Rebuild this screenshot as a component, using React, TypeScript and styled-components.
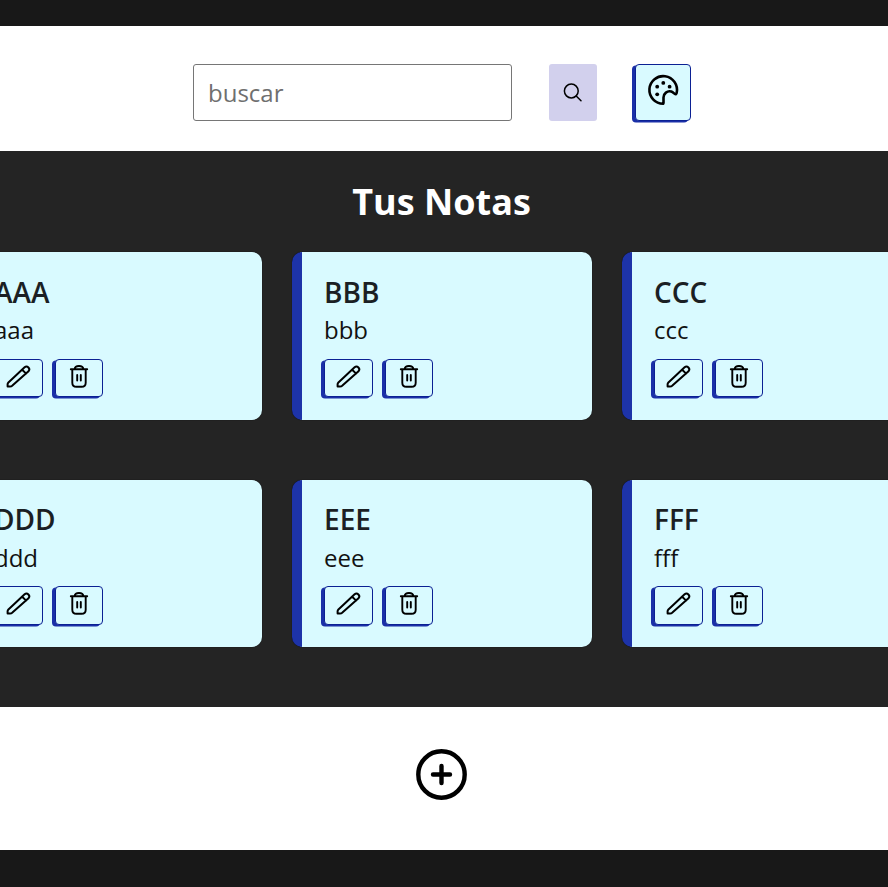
import React from 'react';
import styled, { createGlobalStyle } from 'styled-components';

const GlobalStyle = createGlobalStyle`
  * { box-sizing: border-box; }
  body {
    margin: 0;
    background: #181818;
    font-family: 'Open Sans', 'Noto Sans', sans-serif;
    overflow: hidden;
  }
`;

const Page = styled.div`
  width: 883px;
  padding-top: 26px;
`;

const Band = styled.div<{ $height: number; $dark?: boolean }>`
  width: 888px;
  height: ${(p) => p.$height}px;
  padding-right: 5px;
  background: ${(p) => (p.$dark ? '#242424' : '#fff')};
`;

const Header = styled(Band)`
  display: flex;
  align-items: flex-start;
  padding: 38px 0 0 193px;
`;

const SearchInput = styled.input`
  width: 319px;
  height: 57px;
  margin-right: 37px;
  padding: 0 14px;
  border: 1px solid #767676;
  border-radius: 3px;
  background: #fff;
  font: 400 24px 'Open Sans', sans-serif;
  outline: none;
  &::placeholder { color: #6f6f6f; opacity: 1; }
`;

const SearchButton = styled.button`
  display: flex;
  align-items: center;
  justify-content: center;
  width: 48px;
  height: 57px;
  margin-right: 38px;
  padding: 0;
  border: 0;
  border-radius: 3px;
  background: #d2d0ed;
`;

const RaisedButton = styled.button<{ $width: number; $height: number }>`
  display: flex;
  align-items: flex-start;
  justify-content: center;
  width: ${(p) => p.$width}px;
  height: ${(p) => p.$height}px;
  padding: 0;
  border: 1px solid #0b2093;
  border-radius: 4px;
  background: #d9faff;
  box-shadow: -3px 1.5px 0 #1a2fa8;
  color: #000;
`;

const PaletteButton = styled(RaisedButton)`
  padding-top: 8px;
`;

const Title = styled.h1`
  margin: 0;
  padding-top: 25px;
  height: 101px;
  color: #fff;
  font-size: 36px;
  font-weight: 700;
  line-height: 52px;
  text-align: center;
`;

const NotesGrid = styled.div`
  display: grid;
  grid-template-columns: repeat(3, 300px);
  grid-template-rows: 167.5px 167.5px;
  gap: 60px 30px;
  margin-left: -38px;
`;

const Card = styled.article`
  padding: 19.7px 0 0 22px;
  border-left: 10px solid #1d33a8;
  border-radius: 10px;
  background: #d9faff;
  box-shadow: 0 0 1px #000;
`;

const CardTitle = styled.h2`
  margin: 0;
  color: #1b1f24;
  font-size: 28px;
  font-weight: 600;
  line-height: 40px;
`;

const CardText = styled.p`
  margin: 0;
  padding-top: 0.5px;
  color: #111;
  font-size: 24px;
  line-height: 36px;
`;

const Actions = styled.div`
  display: flex;
  gap: 12px;
  margin-top: 10.6px;
`;

const ActionButton = styled(RaisedButton)`
  padding-top: 4px;
`;

const Footer = styled(Band)`
  display: flex;
  align-items: flex-start;
  justify-content: center;
  padding-top: 42px;
`;

const Viewport = styled.main`
  width: 888px;
  height: 887px;
  overflow: hidden;
`;

const stroke = { fill: 'none', stroke: '#000', strokeLinecap: 'round', strokeLinejoin: 'round' } as const;

const SearchIcon = () => (
  <svg width="20" height="20" viewBox="0 0 20 20" {...stroke} strokeWidth="1.5">
    <circle cx="8.3" cy="8" r="6.9" />
    <path d="m13.2 13 4.8 4.8" />
  </svg>
);

const PaletteIcon = () => (
  <svg width="34" height="34" viewBox="0 0 34 34" {...stroke} strokeWidth="2.6">
    <path d="M17.2 30.7A13.8 13.8 0 1 1 30.7 19.8q-.4 1.9-2 1.1c-.9-.4-1.4-1.6-3.4-2.3-4-1.2-7.8 1.9-7.8 5.9v5.2q0 .9-.3 1z" />
    <g fill="#000" stroke="none">
      <circle cx="11.2" cy="13.7" r="1.9" />
      <circle cx="17.3" cy="9.9" r="1.9" />
      <circle cx="23.6" cy="13.7" r="1.9" />
      <circle cx="11.2" cy="21.3" r="1.9" />
    </g>
  </svg>
);

const PencilIcon = () => (
  <svg width="28" height="26" viewBox="0 0 28 26" {...stroke} strokeWidth="2">
    <path d="M2.6 22.6V20.3Q2.6 19.3 3.4 18.5L19.6 3.3a2.8 2.8 0 0 1 3.9 4L7.4 21.6Q6.4 22.6 5 22.6zM17.2 5.7l3.9 3.9" />
  </svg>
);

const TrashIcon = () => (
  <svg width="22" height="26" viewBox="0 0 22 26" {...stroke} strokeWidth="1.9">
    <path d="M2.8 5.3h16.4M6.6 5.1Q7 2 11 2t4.4 3.1M4.3 5.5v13.2q0 4.1 4.1 4.1h5.2q4.1 0 4.1-4.1V5.5" />
    <path d="M9.2 11v5.6M12.8 11v5.6" />
  </svg>
);

const PlusIcon = () => (
  <svg width="52" height="52" viewBox="0 0 52 52" {...stroke} strokeWidth="4.4">
    <circle cx="25.5" cy="25.5" r="23.2" />
    <path d="M25.5 17v17M17 25.5h17" />
  </svg>
);

const notes = ['A', 'B', 'C', 'D', 'E', 'F'].map((c) => ({
  title: c.repeat(3),
  text: c.toLowerCase().repeat(3),
}));

export default function App() {
  return (
    <Viewport>
      <GlobalStyle />
      <Page>
        <Header $height={125}>
          <SearchInput placeholder="buscar" />
          <SearchButton aria-label="Buscar"><SearchIcon /></SearchButton>
          <PaletteButton $width={56} $height={57} aria-label="Color"><PaletteIcon /></PaletteButton>
        </Header>
        <Band $height={556} $dark>
          <Title>Tus Notas</Title>
          <NotesGrid>
            {notes.map((note) => (
              <Card key={note.title}>
                <CardTitle>{note.title}</CardTitle>
                <CardText>{note.text}</CardText>
                <Actions>
                  <ActionButton $width={49} $height={38.5} aria-label="Editar"><PencilIcon /></ActionButton>
                  <ActionButton $width={48} $height={38.5} aria-label="Borrar"><TrashIcon /></ActionButton>
                </Actions>
              </Card>
            ))}
          </NotesGrid>
        </Band>
        <Footer $height={143}><PlusIcon /></Footer>
      </Page>
    </Viewport>
  );
}
